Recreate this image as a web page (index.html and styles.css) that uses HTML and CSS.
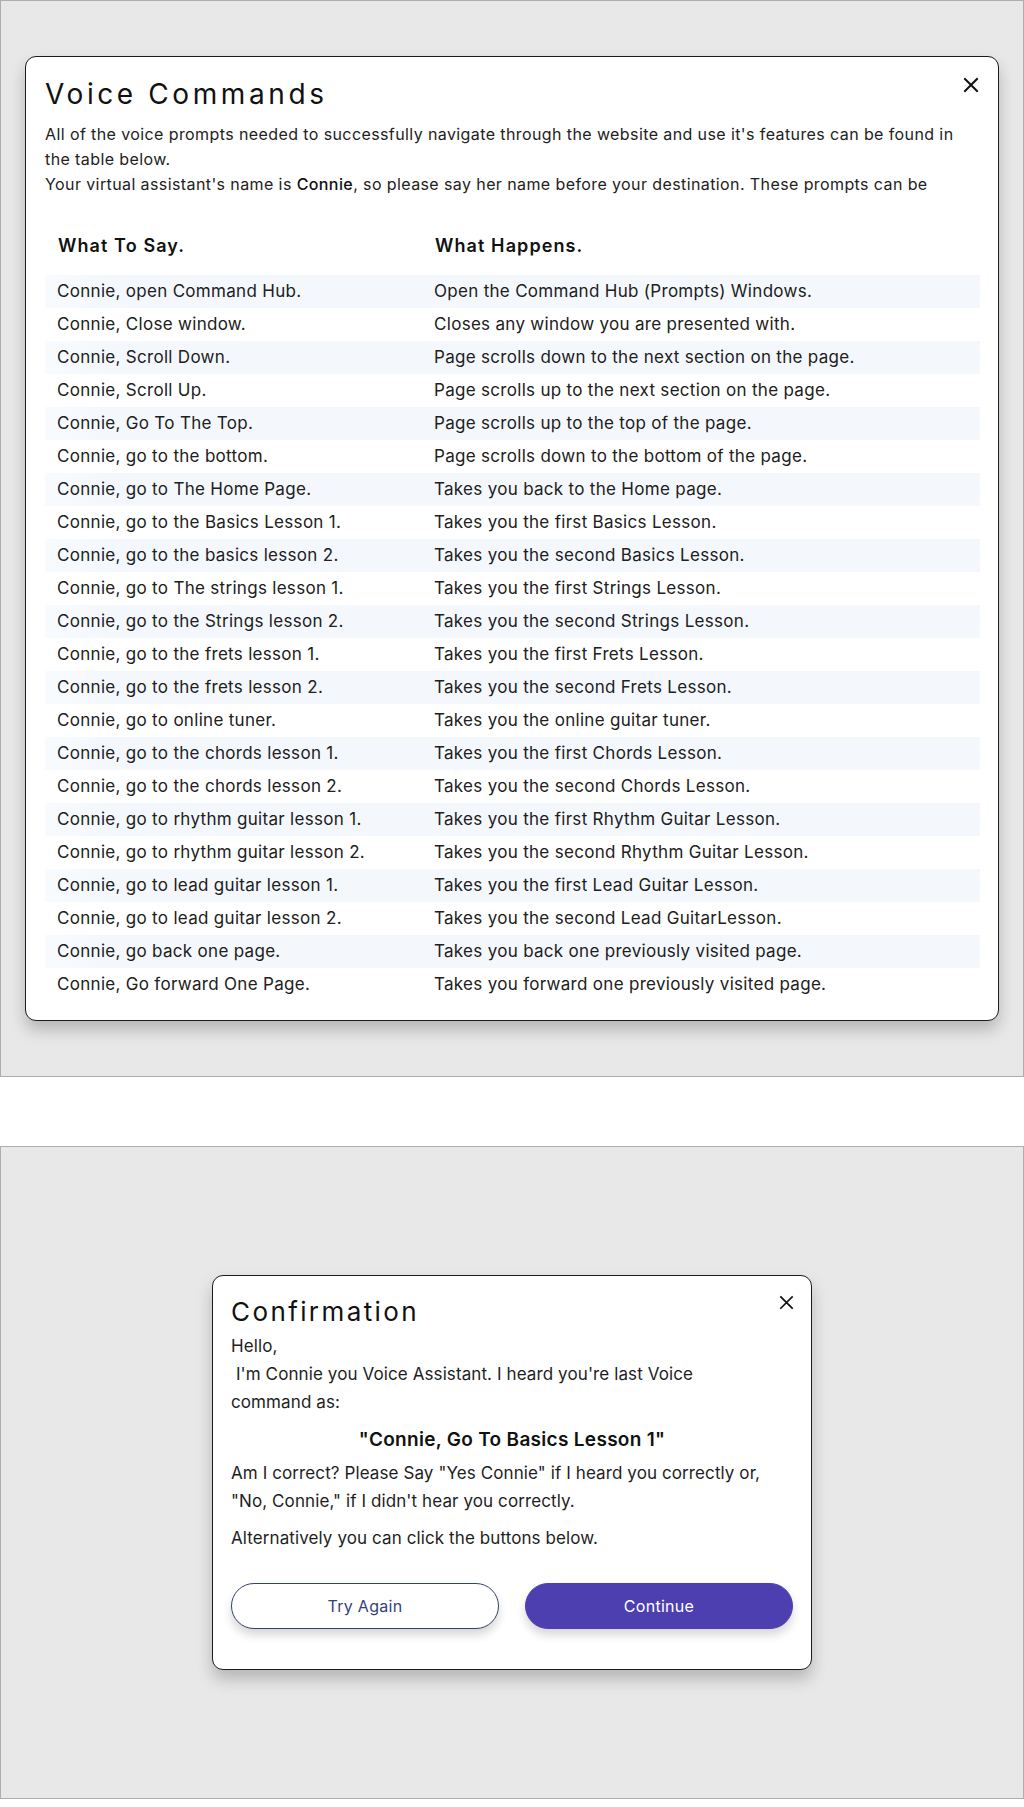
FILE: index.html
```html
<!DOCTYPE html>
<html lang="en">
<head>
<meta charset="utf-8">
<title>Voice Commands</title>
<link rel="stylesheet" href="styles.css">
</head>
<body>
<section class="stage stage-commands">
  <div class="modal modal-commands">
    <button class="close" aria-label="Close">
      <svg viewBox="0 0 16 16" width="16" height="16"><path d="M2 2 L14 14 M14 2 L2 14" stroke="#111" stroke-width="2" stroke-linecap="square" fill="none"/></svg>
    </button>
    <h1 class="modal-title">Voice Commands</h1>
    <p class="intro">All of the voice prompts needed to successfully navigate through the website and use it's features can be found in the table below.<br>Your virtual assistant's name is <strong>Connie</strong>, so please say her name before your destination. These prompts can be</p>
    <table class="cmd-table">
      <thead>
        <tr><th class="col-say">What To Say.</th><th>What Happens.</th></tr>
      </thead>
      <tbody>
        <tr><td>Connie, open Command Hub.</td><td>Open the Command Hub (Prompts) Windows.</td></tr>
        <tr><td>Connie, Close window.</td><td>Closes any window you are presented with.</td></tr>
        <tr><td>Connie, Scroll Down.</td><td>Page scrolls down to the next section on the page.</td></tr>
        <tr><td>Connie, Scroll Up.</td><td>Page scrolls up to the next section on the page.</td></tr>
        <tr><td>Connie, Go To The Top.</td><td>Page scrolls up to the top of the page.</td></tr>
        <tr><td>Connie, go to the bottom.</td><td>Page scrolls down to the bottom of the page.</td></tr>
        <tr><td>Connie, go to The Home Page.</td><td>Takes you back to the Home page.</td></tr>
        <tr><td>Connie, go to the Basics Lesson 1.</td><td>Takes you the first Basics Lesson.</td></tr>
        <tr><td>Connie, go to the basics lesson 2.</td><td>Takes you the second Basics Lesson.</td></tr>
        <tr><td>Connie, go to The strings lesson 1.</td><td>Takes you the first Strings Lesson.</td></tr>
        <tr><td>Connie, go to the Strings lesson 2.</td><td>Takes you the second Strings Lesson.</td></tr>
        <tr><td>Connie, go to the frets lesson 1.</td><td>Takes you the first Frets Lesson.</td></tr>
        <tr><td>Connie, go to the frets lesson 2.</td><td>Takes you the second Frets Lesson.</td></tr>
        <tr><td>Connie, go to online tuner.</td><td>Takes you the online guitar tuner.</td></tr>
        <tr><td>Connie, go to the chords lesson 1.</td><td>Takes you the first Chords Lesson.</td></tr>
        <tr><td>Connie, go to the chords lesson 2.</td><td>Takes you the second Chords Lesson.</td></tr>
        <tr><td>Connie, go to rhythm guitar lesson 1.</td><td>Takes you the first Rhythm Guitar Lesson.</td></tr>
        <tr><td>Connie, go to rhythm guitar lesson 2.</td><td>Takes you the second Rhythm Guitar Lesson.</td></tr>
        <tr><td>Connie, go to lead guitar lesson 1.</td><td>Takes you the first Lead Guitar Lesson.</td></tr>
        <tr><td>Connie, go to lead guitar lesson 2.</td><td>Takes you the second Lead GuitarLesson.</td></tr>
        <tr><td>Connie, go back one page.</td><td>Takes you back one previously visited page.</td></tr>
        <tr><td>Connie, Go forward One Page.</td><td>Takes you forward one previously visited page.</td></tr>
      </tbody>
    </table>
  </div>
</section>

<section class="stage stage-confirm">
  <div class="modal modal-confirm">
    <button class="close close-sm" aria-label="Close">
      <svg viewBox="0 0 16 16" width="15" height="15"><path d="M2 2 L14 14 M14 2 L2 14" stroke="#111" stroke-width="1.8" stroke-linecap="square" fill="none"/></svg>
    </button>
    <h2 class="modal-title confirm-title">Confirmation</h2>
    <p class="greeting">Hello,<br>&nbsp;I'm Connie you Voice Assistant. I heard you're last Voice command as:</p>
    <p class="heard">"Connie, Go To Basics Lesson 1"</p>
    <p class="question">Am I correct? Please Say "Yes Connie" if I heard you correctly or, "No, Connie," if I didn't hear you correctly.</p>
    <p class="alt">Alternatively you can click the buttons below.</p>
    <div class="actions">
      <button class="btn btn-outline">Try Again</button>
      <button class="btn btn-primary">Continue</button>
    </div>
  </div>
</section>
</body>
</html>
```

FILE: styles.css
```css
* { box-sizing: border-box; }

html, body {
  margin: 0;
  padding: 0;
  background: #ffffff;
}

body {
  font-family: "Inter", "Open Sans", sans-serif;
  color: #1e1e1e;
}

.stage {
  background: #e8e8e8;
  border: 1px solid #adadad;
}

.stage-commands {
  padding: 55px 24px 55px;
}

.stage-confirm {
  margin-top: 69px;
  padding: 128px 0;
  display: flex;
  justify-content: center;
}

.modal {
  position: relative;
  background: #ffffff;
  border: 1px solid #1c1c1c;
  border-radius: 11px;
  box-shadow: 0 9px 16px rgba(0, 0, 0, 0.22);
}

.modal-commands {
  padding: 20px 18px 19px 19px;
}

.modal-confirm {
  width: 600px;
  padding: 20px 18px 40px;
}

.close {
  position: absolute;
  top: 19px;
  right: 18px;
  width: 18px;
  height: 18px;
  padding: 0;
  border: 0;
  background: transparent;
  display: flex;
  align-items: center;
  justify-content: center;
}

.close-sm {
  top: 17px;
  right: 16px;
}

.modal-title {
  margin: 0;
  font-size: 28px;
  line-height: 34px;
  font-weight: 400;
  letter-spacing: 3.6px;
  color: #111111;
}

.intro {
  margin: 11px 0 0;
  font-size: 16px;
  line-height: 25px;
  letter-spacing: 0.4px;
  color: #222222;
}

.intro strong {
  font-weight: 500;
  color: #111111;
}

.cmd-table {
  margin-top: 25px;
  width: 100%;
  border-collapse: collapse;
  table-layout: fixed;
}

.cmd-table th {
  text-align: left;
  font-size: 18px;
  line-height: 24px;
  font-weight: 600;
  letter-spacing: 1.1px;
  padding: 12px 13px 17px;
  color: #111111;
}

.cmd-table th.col-say {
  width: 377px;
}

.cmd-table td {
  font-size: 17px;
  line-height: 33px;
  height: 33px;
  letter-spacing: 0.3px;
  padding: 0 12px;
  color: #202020;
  white-space: nowrap;
}

.cmd-table tbody tr:nth-child(odd) td {
  background: #f4f8fd;
}

.cmd-table tbody tr:nth-child(odd) td:first-child {
  background: linear-gradient(90deg, #f8fbfe 0, #f4f8fd 60px);
}

.confirm-title {
  font-size: 26px;
  line-height: 32px;
  letter-spacing: 2.4px;
}

.modal-confirm p {
  font-size: 17px;
  line-height: 28px;
  letter-spacing: 0.1px;
  color: #1e1e1e;
}

.greeting {
  margin: 4px 0 0;
  max-width: 500px;
}

.modal-confirm .heard {
  margin: 10px 0 0;
  text-align: center;
  font-size: 19px;
  font-weight: 600;
  letter-spacing: 0.3px;
  color: #111111;
}

.question {
  margin: 5px 0 0;
}

.alt {
  margin: 9px 0 0;
}

.actions {
  margin-top: 31px;
  display: grid;
  grid-template-columns: 1fr 1fr;
  gap: 26px;
}

.btn {
  height: 46px;
  border-radius: 23px;
  font-family: "Inter", "Open Sans", sans-serif;
  font-size: 16px;
  letter-spacing: 0.3px;
  box-shadow: 0 6px 10px rgba(0, 0, 0, 0.16);
  cursor: pointer;
}

.btn-outline {
  background: #ffffff;
  border: 1px solid #34406e;
  color: #36427a;
}

.btn-primary {
  background: #4e3fb1;
  border: 1px solid #4e3fb1;
  color: #ffffff;
}
```
